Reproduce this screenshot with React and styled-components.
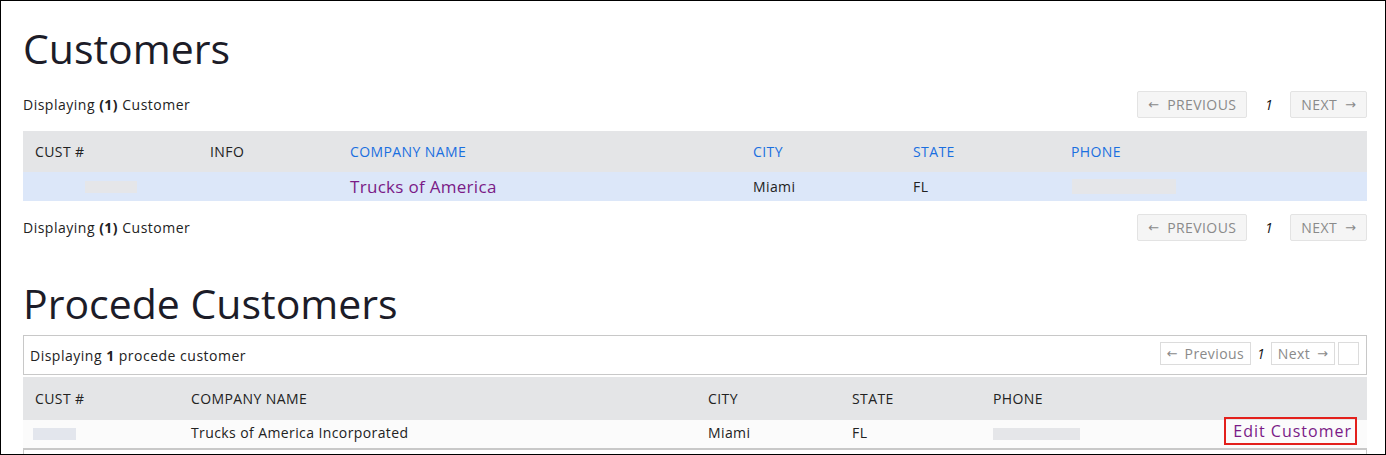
import styled, { createGlobalStyle } from 'styled-components'

const GlobalStyle = createGlobalStyle`
	html, body {
		margin: 0;
		padding: 0;
		background: #fff;
	}
	body {
		font-family: 'Open Sans', 'Noto Sans', sans-serif;
		color: #222;
	}
	* {
		box-sizing: border-box;
	}
`

const firstCols = '175px 140px 403px 160px 158px 1fr'
const secondCols = '156px 517px 144px 141px 1fr 160px'

export default function App() {
	return (
		<>
			<GlobalStyle />
			<Page>
				<Title>Customers</Title>
				<CountBar $top={19}>
					<Count>
						Displaying <b>(1)</b> Customer
					</Count>
					<Pager>
						<PageButton>
							<Arrow>←</Arrow> PREVIOUS
						</PageButton>
						<PageNum>1</PageNum>
						<PageButton>
							NEXT <Arrow>→</Arrow>
						</PageButton>
					</Pager>
				</CountBar>

				<Table>
					<HeadRow $cols={firstCols} $height={41}>
						<Cell>CUST #</Cell>
						<Cell>INFO</Cell>
						<SortCell>COMPANY NAME</SortCell>
						<SortCell>CITY</SortCell>
						<SortCell>STATE</SortCell>
						<SortCell>PHONE</SortCell>
					</HeadRow>
					<BodyRow $cols={firstCols} $height={29} $bg="#dce7f9">
						<Cell>
							<Redacted $w={52} $h={12} $left={50} />
						</Cell>
						<Cell />
						<Cell>
							<CompanyLink>Trucks of America</CompanyLink>
						</Cell>
						<Cell>Miami</Cell>
						<Cell>FL</Cell>
						<Cell>
							<Redacted $w={104} $h={15} $left={1} />
						</Cell>
					</BodyRow>
				</Table>

				<CountBar $top={13}>
					<Count>
						Displaying <b>(1)</b> Customer
					</Count>
					<Pager>
						<PageButton>
							<Arrow>←</Arrow> PREVIOUS
						</PageButton>
						<PageNum>1</PageNum>
						<PageButton>
							NEXT <Arrow>→</Arrow>
						</PageButton>
					</Pager>
				</CountBar>

				<Title $top={38}>Procede Customers</Title>

				<InfoBox>
					<Count>
						Displaying <b>1</b> procede customer
					</Count>
					<SmallPager>
						<SmallButton>
							<Arrow>←</Arrow> Previous
						</SmallButton>
						<SmallNum>1</SmallNum>
						<SmallButton>
							Next <Arrow>→</Arrow>
						</SmallButton>
						<SmallButton $empty />
					</SmallPager>
				</InfoBox>

				<Table $top={2}>
					<HeadRow $cols={secondCols} $height={43}>
						<Cell>CUST #</Cell>
						<Cell>COMPANY NAME</Cell>
						<Cell>CITY</Cell>
						<Cell>STATE</Cell>
						<Cell>PHONE</Cell>
						<Cell />
					</HeadRow>
					<BodyRow $cols={secondCols} $height={28} $bg="#fbfbfb">
						<Cell>
							<Redacted $w={43} $h={12} $left={-2} $color="#e3e6ed" />
						</Cell>
						<Cell $shift={-2}>Trucks of America Incorporated</Cell>
						<Cell $shift={-2}>Miami</Cell>
						<Cell $shift={-2}>FL</Cell>
						<Cell>
							<Redacted $w={87} $h={12} $left={0} />
						</Cell>
						<ActionCell>
							<EditLink>Edit Customer</EditLink>
						</ActionCell>
					</BodyRow>
				</Table>
				<NextBox />
			</Page>
		</>
	)
}

const Page = styled.div`
	height: 455px;
	overflow: hidden;
	border: 1px solid #000;
	padding: 23px 18px 0 22px;
`

const Title = styled.h1`
	margin: ${({ $top }) => $top || 0}px 0 0;
	font-size: 41px;
	line-height: 48px;
	font-weight: 400;
	color: #1c1c28;
`

const CountBar = styled.div`
	display: flex;
	align-items: center;
	justify-content: space-between;
	height: 27px;
	margin-top: ${({ $top }) => $top}px;
`

const Count = styled.div`
	font-size: 14px;
	letter-spacing: 0.5px;
	color: #222;

	b {
		font-weight: 700;
	}
`

const Arrow = styled.span`
	font-family: 'DejaVu Sans', sans-serif;
	font-size: 13px;
	letter-spacing: 0;
`

const Pager = styled.div`
	display: flex;
	align-items: center;
	height: 100%;
`

const PageButton = styled.div`
	display: flex;
	align-items: center;
	gap: 4px;
	height: 27px;
	padding: 0 10px;
	background: #f5f5f5;
	border: 1px solid #e3e3e3;
	border-radius: 2px;
	font-size: 14px;
	letter-spacing: 0.4px;
	color: #8a8a8a;
	white-space: pre;
`

const PageNum = styled.span`
	width: 43px;
	text-align: center;
	font-size: 14px;
	font-style: italic;
	color: #111;
`

const Table = styled.div`
	margin-top: ${({ $top }) => ($top === undefined ? 13 : $top)}px;
`

const Row = styled.div`
	display: grid;
	grid-template-columns: ${({ $cols }) => $cols};
	align-items: center;
	height: ${({ $height }) => $height}px;
	font-size: 14px;
	letter-spacing: 0.4px;
`

const HeadRow = styled(Row)`
	background: #e4e5e7;
	color: #222;
`

const BodyRow = styled(Row)`
	background: ${({ $bg }) => $bg};
	color: #222;
`

const Cell = styled.div`
	display: flex;
	align-items: center;
	padding-left: 12px;
	margin-top: ${({ $shift }) => ($shift || 0) * 2}px;
	white-space: nowrap;
`

const SortCell = styled(Cell)`
	color: #1a6fe0;
`

const ActionCell = styled(Cell)`
	justify-content: flex-end;
	padding-left: 0;
	padding-right: 10px;
`

const Redacted = styled.span`
	display: inline-block;
	width: ${({ $w }) => $w}px;
	height: ${({ $h }) => $h}px;
	margin-left: ${({ $left }) => $left}px;
	background: ${({ $color }) => $color || '#e5e6e9'};
`

const CompanyLink = styled.a`
	font-size: 17px;
	letter-spacing: 0.3px;
	color: #7a1a87;
	text-decoration: none;
`

const EditLink = styled.a`
	display: flex;
	align-items: center;
	height: 28px;
	margin-top: -6px;
	padding: 0 3px 0 7px;
	border: 2px solid #e3201c;
	font-size: 16px;
	letter-spacing: 1px;
	color: #7a1a87;
	text-decoration: none;
`

const InfoBox = styled.div`
	display: flex;
	align-items: center;
	justify-content: space-between;
	height: 40px;
	margin-top: 8px;
	padding: 0 7px 0 6px;
	border: 1px solid #c8c8c8;
`

const SmallPager = styled.div`
	display: flex;
	align-items: center;
	gap: 3px;
	margin-bottom: 3px;
`

const SmallButton = styled.div`
	display: flex;
	align-items: center;
	justify-content: center;
	gap: 3px;
	height: 23px;
	min-width: ${({ $empty }) => ($empty ? '21px' : '0')};
	padding: ${({ $empty }) => ($empty ? '0' : '0 6px')};
	background: #fff;
	border: 1px solid #dcdcdc;
	font-size: 14px;
	letter-spacing: 0.4px;
	color: #8a8a8a;
	white-space: pre;
`

const SmallNum = styled.span`
	padding: 0 3px;
	font-size: 14px;
	font-style: italic;
	color: #111;
`

const NextBox = styled.div`
	height: 20px;
	border: 1px solid #c8c8c8;
	border-top-width: 2px;
`
